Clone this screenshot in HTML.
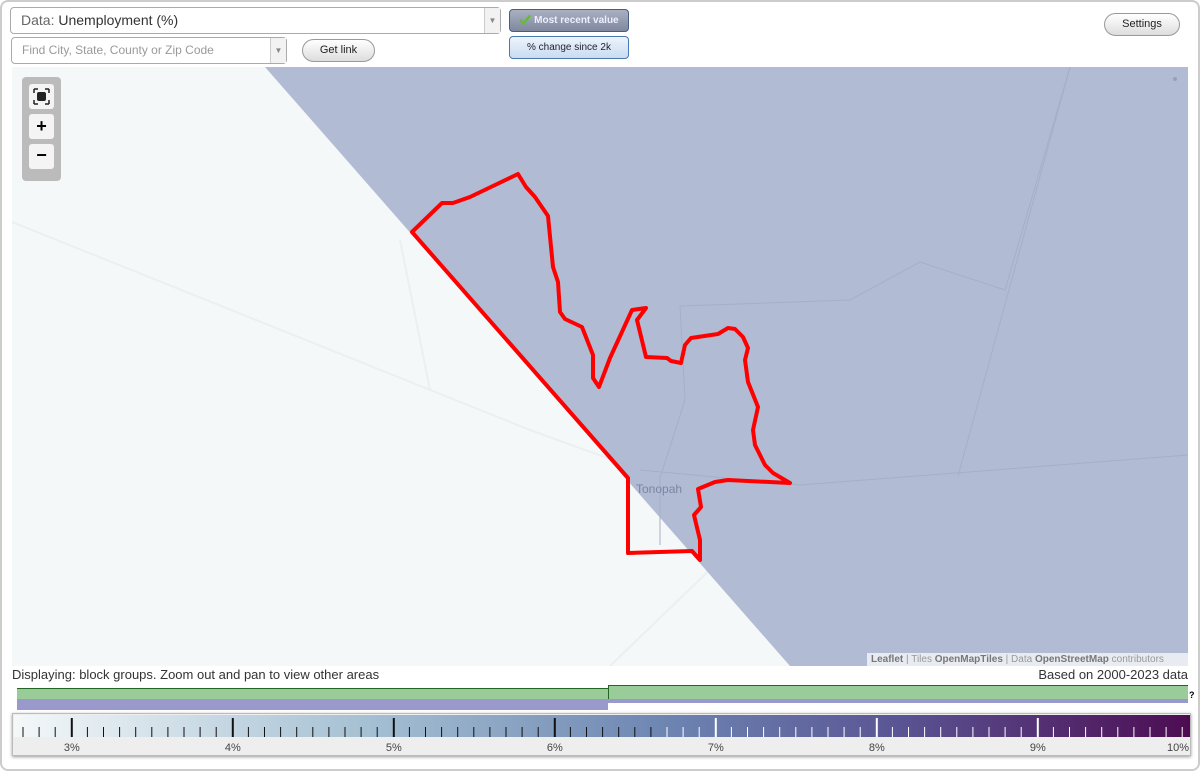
<!DOCTYPE html>
<html><head><meta charset="utf-8"><style>
*{margin:0;padding:0;box-sizing:border-box}
body{width:1200px;height:771px;background:#fff;font-family:"Liberation Sans",sans-serif;position:relative;overflow:hidden}
.frame{position:absolute;left:0;top:0;width:1200px;height:771px;border:2px solid #ccc;border-radius:8px}
.sel{position:absolute;background:#fff;border:1px solid #aaa;border-radius:4px;font-size:14px;color:#333}
.sel .arr{position:absolute;right:0;top:0;bottom:0;width:16px;border-left:1px solid #ccc;background:#f2f2f2;color:#888;font-size:8px;text-align:center}
.btn{position:absolute;border:1px solid #999;border-radius:12px;background:linear-gradient(#fff,#ddd);font-size:12px;text-align:center;color:#222}
.tog{position:absolute;border-radius:4px;font-size:10px;text-align:center}
</style></head><body>
<div class="frame"></div>
<div class="sel" style="left:10px;top:7px;width:491px;height:27px;line-height:25px;padding-left:10px"><span style="color:#666">Data:</span> Unemployment (%)<div class="arr" style="line-height:25px">▼</div></div>
<div class="sel" style="left:11px;top:37px;width:276px;height:27px;line-height:25px;padding-left:10px;color:#999;font-size:12px">Find City, State, County or Zip Code<div class="arr" style="line-height:25px">▼</div></div>
<div class="btn" style="left:302px;top:39px;width:73px;height:23px;line-height:21px;font-size:11px">Get link</div>
<div class="btn" style="left:1104px;top:13px;width:76px;height:23px;line-height:21px;font-size:11px">Settings</div>
<div class="tog" style="left:509px;top:9px;width:120px;height:23px;line-height:21px;background:linear-gradient(#a9b0c2,#7f889f);border:1px solid #4a5c80;color:#eef;font-weight:bold"><svg width="12" height="11" style="vertical-align:-2px" viewBox="0 0 12 11"><path d="M1 6 L4.5 9.5 L11 1.5" stroke="#6b3" stroke-width="2.5" fill="none"/></svg> Most recent value</div>
<div class="tog" style="left:509px;top:36px;width:120px;height:23px;line-height:21px;background:linear-gradient(#eef4fb,#c9dcf0);border:1px solid #4a78b0;color:#223">% change since 2k</div>

<svg style="position:absolute;left:12px;top:67px" width="1176" height="599" viewBox="12 67 1176 599">
<rect x="12" y="67" width="1176" height="599" fill="#f5f8f9"/>
<g stroke="#eceff1" stroke-width="2" fill="none"><path d="M12 222 L530 430 L640 470"/><path d="M400 240 L430 390"/><path d="M720 560 L610 666"/></g>
<polygon points="265,67 1188,67 1188,666 790,666" fill="#b1bbd4"/>
<g stroke="#a5afc8" stroke-width="1" fill="none"><path d="M1070 67 L958 476"/><path d="M680 306 L850 300 L920 262 L1005 290 L1070 67"/><path d="M640 470 L800 485 L1188 455"/><path d="M680 306 L685 400 L660 478 L660 545"/></g>
<text x="636" y="493" font-size="12" fill="#7a86a4" font-family="Liberation Sans">Tonopah</text>
<circle cx="1175" cy="79" r="2" fill="#98a0b5"/>
<polygon fill="none" stroke="#f00" stroke-width="4" stroke-linejoin="round" points="412,232 442,203 453,203 470,197 518,174 526,187 535,197 548,216 553,267 558,282 560,312 565,319 582,327 593,355 593,378 599,387 610,358 632,310 646,308 637,320 646,357 667,358 671,361 681,363 685,345 691,338 718,334 728,328 735,329 743,337 748,348 745,360 748,382 758,407 753,430 755,445 765,465 773,473 790,483 728,480 715,482 698,489 701,507 694,515 700,540 700,560 692,551 628,553 628,478"/>
</svg>
<div style="position:absolute;left:22px;top:77px;width:39px;height:104px;background:#bbb;border-radius:4px"></div>
<div style="position:absolute;left:29px;top:84px;width:25px;height:25px;background:#f4f4f4;border-radius:3px"><svg width="25" height="25" viewBox="0 0 25 25"><rect x="8" y="8" width="9" height="9" rx="2" fill="#222"/><path d="M5 5h4M5 5v4M20 5h-4M20 5v4M5 20h4M5 20v-4M20 20h-4M20 20v-4" stroke="#222" stroke-width="1.5"/></svg></div>
<div style="position:absolute;left:29px;top:114px;width:25px;height:25px;background:#f4f4f4;border-radius:3px;text-align:center;line-height:25px;font-size:18px;font-weight:bold">+</div>
<div style="position:absolute;left:29px;top:144px;width:25px;height:25px;background:#f4f4f4;border-radius:3px;text-align:center;line-height:23px;font-size:18px;font-weight:bold">−</div>
<div style="position:absolute;left:867px;top:653px;width:321px;height:13px;background:rgba(255,255,255,.7);font-size:10px;line-height:13px;color:#999;padding-left:4px"><b style="color:#777">Leaflet</b> | Tiles <b style="color:#777">OpenMapTiles</b> | Data <b style="color:#777">OpenStreetMap</b> contributors</div>
<div style="position:absolute;left:12px;top:667px;font-size:13px;color:#333">Displaying: block groups. Zoom out and pan to view other areas</div>
<div style="position:absolute;right:12px;top:667px;font-size:13px;color:#333">Based on 2000-2023 data</div>
<div style="position:absolute;left:17px;top:688px;width:592px;height:11px;background:#9c9;border-top:1px solid #262"></div>
<div style="position:absolute;left:608px;top:685px;width:580px;height:14px;background:#9c9;border-top:1px solid #262;border-left:1px solid #262"></div>
<div style="position:absolute;left:17px;top:699px;width:591px;height:11px;background:#99c"></div>
<div style="position:absolute;left:608px;top:699px;width:580px;height:4px;background:#99c"></div>
<div style="position:absolute;left:1189px;top:690px;font-size:9px;font-weight:bold">?</div>
<div style="position:absolute;left:12px;top:713px;width:1179px;height:43px;border:1px solid #bbb;box-shadow:0 1px 3px #999;background:#eee"></div>
<svg style="position:absolute;left:14px;top:715px" width="1176" height="40" id="lg">
<defs><linearGradient id="g" x1="0" x2="1"><stop offset="0" stop-color="#f4f8f9"/><stop offset=".3" stop-color="#a5c0d3"/><stop offset=".55" stop-color="#6e86b2"/><stop offset=".75" stop-color="#5a5594"/><stop offset="1" stop-color="#4d0c52"/></linearGradient></defs>
<rect width="1176" height="22" fill="url(#g)"/>
</svg>
<script>
var s=document.getElementById('lg'),h='';
for(var i=0;i<73;i++){var x=9+i*16.1-0.5;var n=i-3;var maj=(n%10==0);var c=x<640?'#111':'#fff';
if(x>1175)break;
h+='<rect x="'+x.toFixed(1)+'" y="'+(maj?3:12)+'" width="'+(maj?2:1)+'" height="'+(maj?19:10)+'" fill="'+c+'"/>';
if(maj){var p=3+n/10;h+='<text x="'+(x+1)+'" y="36" font-size="11" text-anchor="middle" fill="#444" font-family="Liberation Sans">'+p+'%</text>';}}
h+='<text x="1175" y="36" font-size="11" text-anchor="end" fill="#444" font-family="Liberation Sans">10%</text>';
s.innerHTML+=h;
</script>
</body></html>
